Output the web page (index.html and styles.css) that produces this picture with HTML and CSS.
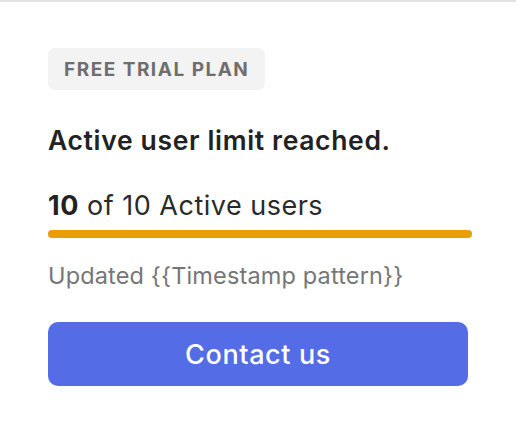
FILE: index.html
```html
<!DOCTYPE html>
<html>
<head>
<meta charset="utf-8">
<link rel="stylesheet" href="styles.css">
</head>
<body>
<div class="topline"></div>
<main class="card">
  <div class="badge">FREE TRIAL PLAN</div>
  <h1 class="title">Active user limit reached.</h1>
  <div class="count"><strong>10</strong> of 10 Active users</div>
  <div class="bar"><div class="fill" style="width:100%"></div></div>
  <div class="updated">Updated {{Timestamp pattern}}</div>
  <button class="cta">Contact us</button>
</main>
</body>
</html>
```
FILE: styles.css
```css
html, body {
  margin: 0;
  padding: 0;
  background: #ffffff;
}
body {
  font-family: Inter, "Noto Sans", sans-serif;
  color: #262626;
}
.topline {
  height: 2px;
  background: #e2e2e2;
}
.card {
  padding: 46px 48px 0 48px;
  width: 420px;
  display: flex;
  flex-direction: column;
  align-items: flex-start;
}
.badge {
  background: #f3f3f3;
  border-radius: 7px;
  height: 42px;
  padding: 0 16px 0 16px;
  display: flex;
  align-items: center;
  font-size: 19px;
  font-weight: 700;
  letter-spacing: 1.5px;
  color: #6e6e6e;
}
.title {
  margin: 35px 0 0 0;
  font-size: 26.5px;
  font-weight: 600;
  line-height: 30px;
  letter-spacing: 0.65px;
  color: #222222;
}
.count {
  margin-top: 35px;
  font-size: 27px;
  line-height: 32px;
  letter-spacing: 0.5px;
  color: #2a2a2a;
}
.count strong {
  font-weight: 700;
  color: #222222;
}
.bar {
  margin-top: 8px;
  width: 424px;
  height: 8px;
  border-radius: 4px;
  background: #eeeeee;
}
.fill {
  height: 100%;
  border-radius: 4px;
  background: #eb9d06;
}
.updated {
  margin-top: 24px;
  font-size: 23.5px;
  line-height: 28px;
  letter-spacing: 0.15px;
  color: #767676;
}
.cta {
  margin-top: 32px;
  width: 420px;
  height: 64px;
  padding: 0;
  border: none;
  border-radius: 10px;
  background: #546ce6;
  color: #ffffff;
  font-family: Inter, "Noto Sans", sans-serif;
  font-size: 27px;
  font-weight: 500;
  letter-spacing: 0.6px;
}
```
